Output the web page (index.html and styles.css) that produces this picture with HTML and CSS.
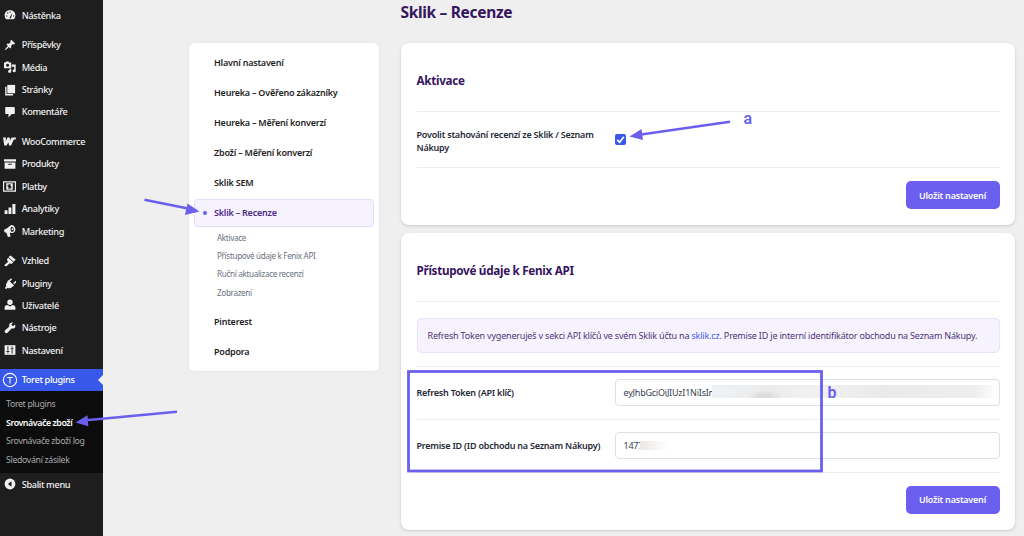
FILE: index.html
```html
<!DOCTYPE html>
<html lang="cs">
<head>
  <meta charset="utf-8">
  <title>Sklik – Recenze</title>
  <link rel="stylesheet" href="styles.css">
</head>
<body>

  <aside class="admin-menu">
    <ul class="menu">
      <li><svg viewBox="0 0 20 20"><path d="M3.8 17A9 9 0 1 1 16.200 17Z"/><path class="cut" d="M9 15l5-9-2.500 10zM3.500 11h2v1.600h-2zM5 6.500l1.300-1.300 1.300 1.400-1.300 1.200zM9.200 3.800h1.800v2H9.200zM15 11h2v1.600h-2z"/></svg>Nástěnka</li>
      <li class="gap"><svg viewBox="0 0 20 20"><path d="M10.440 3.020l1.820-1.820 6.360 6.350-1.830 1.820c-1.050-.68-2.480-.57-3.410.36l-.75.750c-.92.930-1.040 2.350-.35 3.410l-1.830 1.820-2.410-2.410-2.800 2.790c-.42.420-3.380 2.710-3.800 2.290s1.860-3.390 2.280-3.810l2.790-2.790L4.100 9.360l1.830-1.820c1.050.69 2.480.57 3.400-.36l.75-.75c.93-.92 1.050-2.350.36-3.410z"/></svg>Příspěvky</li>
      <li><svg viewBox="0 0 20 20"><path fill-rule="evenodd" d="M0 2.500h2.500L3.500 1h4l1 1.500H12V12H0zM6 4.500a2.600 2.600 0 1 0 .01 0zM13 6h6.500v10.500a2.600 2.300 0 1 1-2.500-2.300V9.500h-4zM12 13v4.500a2.600 2.300 0 1 1-2.500-2.300V13z"/></svg>Média</li>
      <li><svg viewBox="0 0 20 20"><path d="M5.500 1.500h13v14h-13z"/><path d="M2 4.500h2.200v12.300H15V19H2z"/></svg>Stránky</li>
      <li><svg viewBox="0 0 20 20"><path d="M4 1.500h12q2 0 2 2v8q0 2-2 2h-3l-5.500 5.500v-5.500H4q-2 0-2-2v-8q0-2 2-2z"/></svg>Komentáře</li>
      <li class="gap"><svg class="woo" viewBox="0 0 20 20"><path d="M0 4h4.500l-.4 5.500L7 4h3.300l.5 5.500Q12 4 14.500 4H20l-.5 3h-3L12.500 16H9.300l-1-5L5.500 16H2z"/></svg>WooCommerce</li>
      <li><svg viewBox="0 0 20 20"><path fill-rule="evenodd" d="M0 2h20v4H0zM1 7.500h18V18H1zM7 9.500v1.900h6V9.500z"/></svg>Produkty</li>
      <li><svg class="wide" viewBox="0 0 20 20"><path fill-rule="evenodd" d="M0 2h20v16H0zM1.800 3.800v12.400h16.400V3.800zM5 5h10v10H5z"/><path class="cut-line" d="M12.200 7.700H9q-1.300 0-1.300 1.100T9 10h2q1.300 0 1.300 1.100T11 12.300H7.800M10 6.500v7"/></svg>Platby</li>
      <li><svg viewBox="0 0 20 20"><path d="M1 12h4.800v6.500H1zM7.500 7.500h4.800v11H7.500zM14 1.500h5v17h-5z"/></svg>Analytiky</li>
      <li><svg viewBox="0 0 20 20"><path fill-rule="evenodd" d="M12 0c4 0 7 3.500 7 7s-2.500 6.500-5.500 6.500l-4-.5 1.500 6-4.500 1L4 13Q0 12.500 0 9.500T4.500 6zM13 3q-3.500 2-1 8 4.500 1.500 4.500-3 0-4-3.500-5z"/><circle cx="14" cy="7" r="1.500"/></svg>Marketing</li>
      <li class="gap"><svg viewBox="0 0 20 20"><path d="M11 1l8.500 7-3.500 3.200-8.500-7.700zM7 4.700l8.500 7.500-2.500 2.300q-1.600.7-3.200-.6c-2.500 1.500-4 5-7 5-2.500 0-2.500-2.500-.5-3.700 2-1.500 3.500-2.500 4.300-4.400Q4.500 9 5.200 6.700z"/></svg>Vzhled</li>
      <li><svg viewBox="0 0 20 20"><path d="M13.100 4.360L9.870 7.600 8 5.730l3.240-3.240c.35-.34 1.050-.2 1.560.32.520.51.660 1.210.3 1.550zm-8 4.770l1.030-1.020L14.020 16l-1.020 1.020c-1.840 1.830-4.700 2.060-6.800.730l-1.850 1.830H2v-2.400l1.900-1.900c-1.100-2-.6-4.300 1.200-6.150zm10.200 1.100l3.240-3.240c.35-.34 1.050-.2 1.560.32.500.51.660 1.200.3 1.550l-3.240 3.240zM7 5l10 9-4 3L5 9z"/></svg>Pluginy</li>
      <li><svg viewBox="0 0 20 20"><circle cx="10" cy="5.300" r="4.500"/><path d="M1 18v-4q0-3.500 5-4.200l4 2.700 4-2.700Q19 10.500 19 14v4z"/></svg>Uživatelé</li>
      <li><svg viewBox="0 0 20 20"><path d="M18 9.500c-1.500 1.500-3.600 1.900-5.400 1.200l-6.700 7.100c-1.100 1.100-2.900 1.100-4 0s-1.100-2.800 0-3.900L9 7.500c-.8-1.800-.4-4 1.100-5.400C11.500.7 13.500.3 15.200.9L12 4.100l3.100 3.100 3.200-3.200c.6 1.800 1.100 4.100-.3 5.500z"/></svg>Nástroje</li>
      <li><svg viewBox="0 0 20 20"><path d="M1 2h18v16H1z"/><path class="cut-line" d="M6.500 4v7M4 12.500h5M6.500 14v2M13.500 4v2.500M11 8h5M13.500 9.500V16"/></svg>Nastavení</li>
      <li class="gap current"><svg viewBox="0 0 20 20"><circle class="ring" cx="10" cy="10" r="9.500"/><path class="ring" d="M6 6.500h8M10 6.500V15"/></svg>Toret plugins</li>
    </ul>
    <ul class="submenu">
      <li>Toret plugins</li>
      <li class="selected">Srovnávače zboží</li>
      <li>Srovnávače zboží log</li>
      <li>Sledování zásilek</li>
    </ul>
    <div class="collapse"><svg viewBox="0 0 20 20"><circle cx="10" cy="10" r="9"/><path class="cut" d="M12.500 5.500v9L6.500 10z"/></svg>Sbalit menu</div>
  </aside>

  <nav class="settings-nav">
    <a class="nav-item">Hlavní nastavení</a>
    <a class="nav-item">Heureka – Ověřeno zákazníky</a>
    <a class="nav-item">Heureka – Měření konverzí</a>
    <a class="nav-item">Zboží – Měření konverzí</a>
    <a class="nav-item">Sklik SEM</a>
    <a class="nav-item active">Sklik – Recenze</a>
    <div class="nav-sub">
      <a>Aktivace</a>
      <a>Přístupové údaje k Fenix API</a>
      <a>Ruční aktualizace recenzí</a>
      <a>Zobrazení</a>
    </div>
    <a class="nav-item">Pinterest</a>
    <a class="nav-item">Podpora</a>
  </nav>

  <main class="content">
    <h1>Sklik – Recenze</h1>

    <section class="card">
      <h2>Aktivace</h2>
      <div class="row row-check">
        <label for="enable">Povolit stahování recenzí ze Sklik / Seznam Nákupy</label>
        <span class="checkbox" id="enable"><svg viewBox="0 0 10 10"><path d="M2 5.300l2.200 2.200L8 2.500"/></svg></span>
      </div>
      <div class="actions"><button type="button">Uložit nastavení</button></div>
    </section>

    <section class="card">
      <h2>Přístupové údaje k Fenix API</h2>
      <div class="notice-wrap">
        <p class="notice">Refresh Token vygeneruješ v sekci API klíčů ve svém Sklik účtu na <a>sklik.cz</a>. Premise ID je interní identifikátor obchodu na Seznam Nákupy.</p>
      </div>
      <div class="row">
        <label>Refresh Token (API klíč)</label>
        <div class="field"><span class="token">eyJhbGciOiJIUzI1NiIsIn</span><span class="mask mask-token"></span></div>
      </div>
      <div class="row">
        <label>Premise ID (ID obchodu na Seznam Nákupy)</label>
        <div class="field"><span class="premise">1477</span><span class="mask mask-id"></span></div>
      </div>
      <div class="actions"><button type="button">Uložit nastavení</button></div>
    </section>
  </main>

  <!-- arrows and labels over the page -->
  <svg class="annotations" width="1024" height="536" viewBox="0 0 1024 536">
    <path class="shaft" d="M144.500 199.700L188 208.500M730 121.700L641 134.500M177 411.800L86 420.300"/>
    <path class="head" d="M199.500 211.500L185 215l2.500-11.500zM629.500 136.500L641.500 129l1.500 11zM75.500 422.500L87.500 415.200l.8 11z"/>
    <rect class="frame" x="408.500" y="371.500" width="413" height="99.500"/>
    <text x="743.500" y="123.500">a</text>
    <text x="827.500" y="397.500">b</text>
  </svg>

</body>
</html>
```
FILE: styles.css
```css
* {
  box-sizing: border-box;
}

body {
  margin: 0;
  width: 1024px;
  height: 536px;
  overflow: hidden;
  display: flex;
  align-items: flex-start;
  background: #efefef;
  font-family: "Noto Sans", "Open Sans", sans-serif;
  font-size: 9px;
  letter-spacing: -.22px;
  color: #1f2937;
}

ul {
  list-style: none;
  margin: 0;
  padding: 0;
}

/* admin menu */
.admin-menu {
  flex: none;
  width: 103px;
  height: 536px;
  padding-top: 4px;
  background: #1e1e1e;
  color: #f0f0f1;
  font-size: 9.2px;
  font-weight: 500;
  letter-spacing: -.35px;
}

.menu li,
.collapse {
  display: flex;
  align-items: center;
  height: 22.4px;
  padding-left: 4px;
  white-space: nowrap;
}

.menu .gap {
  margin-top: 7.2px;
}

.menu svg,
.collapse svg {
  flex: none;
  width: 12px;
  height: 12px;
  margin-right: 5.700px;
  fill: #f0f0f1;
}

.menu svg.woo,
.menu svg.wide {
  width: 13px;
  height: 13px;
  margin-left: -1px;
}

.menu .cut,
.collapse .cut {
  fill: #1e1e1e;
}

.menu .cut-line {
  fill: none;
  stroke: #1e1e1e;
  stroke-width: 1.600;
}

.menu .ring {
  fill: none;
  stroke: #fff;
  stroke-width: 1.500;
}

.menu .current {
  position: relative;
  background: #3858e9;
  color: #fff;
  padding-left: 3px;
}

.menu .current svg {
  width: 14px;
  height: 14px;
  margin-right: 4.700px;
  overflow: visible;
}

.menu .current::after {
  content: "";
  position: absolute;
  right: 0;
  top: 6px;
  border: 5px solid transparent;
  border-left: 0;
  border-right-color: #efefef;
}

.submenu {
  height: 82px;
  padding: 4px 0 0 6px;
  background: #0c0c0c;
  color: #a9aaad;
  font-size: 8.8px;
  font-weight: 400;
}

.submenu li {
  height: 18.600px;
  line-height: 18.600px;
  white-space: nowrap;
}

.submenu .selected {
  color: #fff;
  font-weight: 600;
  letter-spacing: -.42px;
}

/* plugin navigation */
.settings-nav {
  flex: none;
  width: 190px;
  height: 328px;
  margin: 43px 0 0 85.500px;
  padding: 5px 5px 0;
  background: #fff;
  border-radius: 5px;
  box-shadow: 0 0 2px rgba(0, 0, 0, .08);
}

.nav-item {
  display: flex;
  align-items: center;
  height: 28px;
  margin-bottom: 2.150px;
  padding-left: 19.500px;
  border: 1px solid transparent;
  border-radius: 4px;
  font-weight: 600;
  color: #1e1e1e;
}

.nav-item.active {
  padding-left: 8.500px;
  border-color: #e4dcfc;
  background: #f6f3fe;
  color: #4c2a85;
}

.nav-item.active::before {
  content: "";
  width: 4px;
  height: 4px;
  margin-right: 7px;
  border-radius: 50%;
  background: #6a5fee;
}

.nav-sub {
  margin-bottom: 5.500px;
  padding-left: 23.500px;
  font-size: 8.100px;
  letter-spacing: -.32px;
  color: #6b7280;
}

.nav-sub a {
  display: block;
  height: 18.300px;
  line-height: 18.300px;
}

/* content */
.content {
  flex: none;
  width: 614.500px;
  margin-left: 22px;
}

h1 {
  height: 43px;
  margin: 0;
  line-height: 25px;
  font-size: 15.500px;
  font-weight: 700;
  letter-spacing: -.32px;
  color: #36155f;
}

.card {
  margin-bottom: 8.500px;
  padding: 0 15.500px 16px 16px;
  background: #fff;
  border-radius: 8px;
  box-shadow: 0 1px 3px rgba(0, 0, 0, .16);
}

.card + .card {
  margin-top: -.500px;
}

h2 {
  height: 68px;
  margin: 0;
  padding-top: 26px;
  line-height: 22px;
  font-size: 11.700px;
  font-weight: 700;
  letter-spacing: -.3px;
  color: #36155f;
}

.row {
  display: flex;
  align-items: center;
  height: 53px;
  border-top: 1px solid #eeeef0;
}

.row-check {
  height: 56px;
  padding-top: 2px;
}

.row label {
  flex: none;
  width: 198px;
  padding-right: 10px;
  line-height: 13px;
  font-weight: 600;
  white-space: nowrap;
}

.row-check label {
  white-space: normal;
}

.checkbox {
  width: 11px;
  height: 11px;
  margin-top: -2px;
  border-radius: 2px;
  background: #3858e9;
}

.checkbox svg {
  display: block;
  fill: none;
  stroke: #fff;
  stroke-width: 1.500;
}

.field {
  flex: 1;
  display: flex;
  align-items: center;
  height: 27px;
  padding-left: 8px;
  border: 1px solid #dfdfe3;
  border-radius: 4px;
  color: #374151;
}

.token {
  width: 88px;
  white-space: nowrap;
}

.premise {
  width: 16px;
}

.mask {
  position: relative;
  height: 13px;
}

.mask-token {
  width: 286px;
  margin-top: -3px;
  background: radial-gradient(ellipse 18px 6px at 53px 11px, #d6d7d9, transparent), linear-gradient(90deg, #eef1f3, #ececed 20%, #f1f1f1 35%, #eaeaea 60%, #eeeeee 92%, #fff);
}

.mask-id {
  width: 28px;
  height: 9px;
  background: linear-gradient(90deg, #ebe8e6, #fff);
}

.notice-wrap {
  height: 64.500px;
  padding-top: 15.500px;
  border-top: 1px solid #eeeef0;
}

.notice {
  height: 35px;
  margin: 0;
  padding-left: 10px;
  border: 1px solid #e9e1fc;
  border-radius: 5px;
  background: #f6f3fe;
  line-height: 33px;
  letter-spacing: -.19px;
  color: #4c3575;
  white-space: nowrap;
}

.notice a {
  color: #3f5bf0;
}

.actions {
  display: flex;
  justify-content: flex-end;
  padding-top: 13px;
  border-top: 1px solid #eeeef0;
}

button {
  width: 94px;
  height: 28px;
  padding: 0;
  border: 0;
  border-radius: 5px;
  background: #6a5fee;
  color: #fff;
  font: inherit;
  font-weight: 600;
  letter-spacing: inherit;
}

/* annotations */
.annotations {
  position: absolute;
  top: 0;
  left: 0;
}

.shaft,
.frame {
  fill: none;
  stroke: #6a5fee;
  stroke-width: 2.400;
}

.frame {
  stroke-width: 2.800;
}

.head,
.annotations text {
  fill: #6a5fee;
}

.annotations text {
  font: 600 16px Roboto, sans-serif;
}
```
